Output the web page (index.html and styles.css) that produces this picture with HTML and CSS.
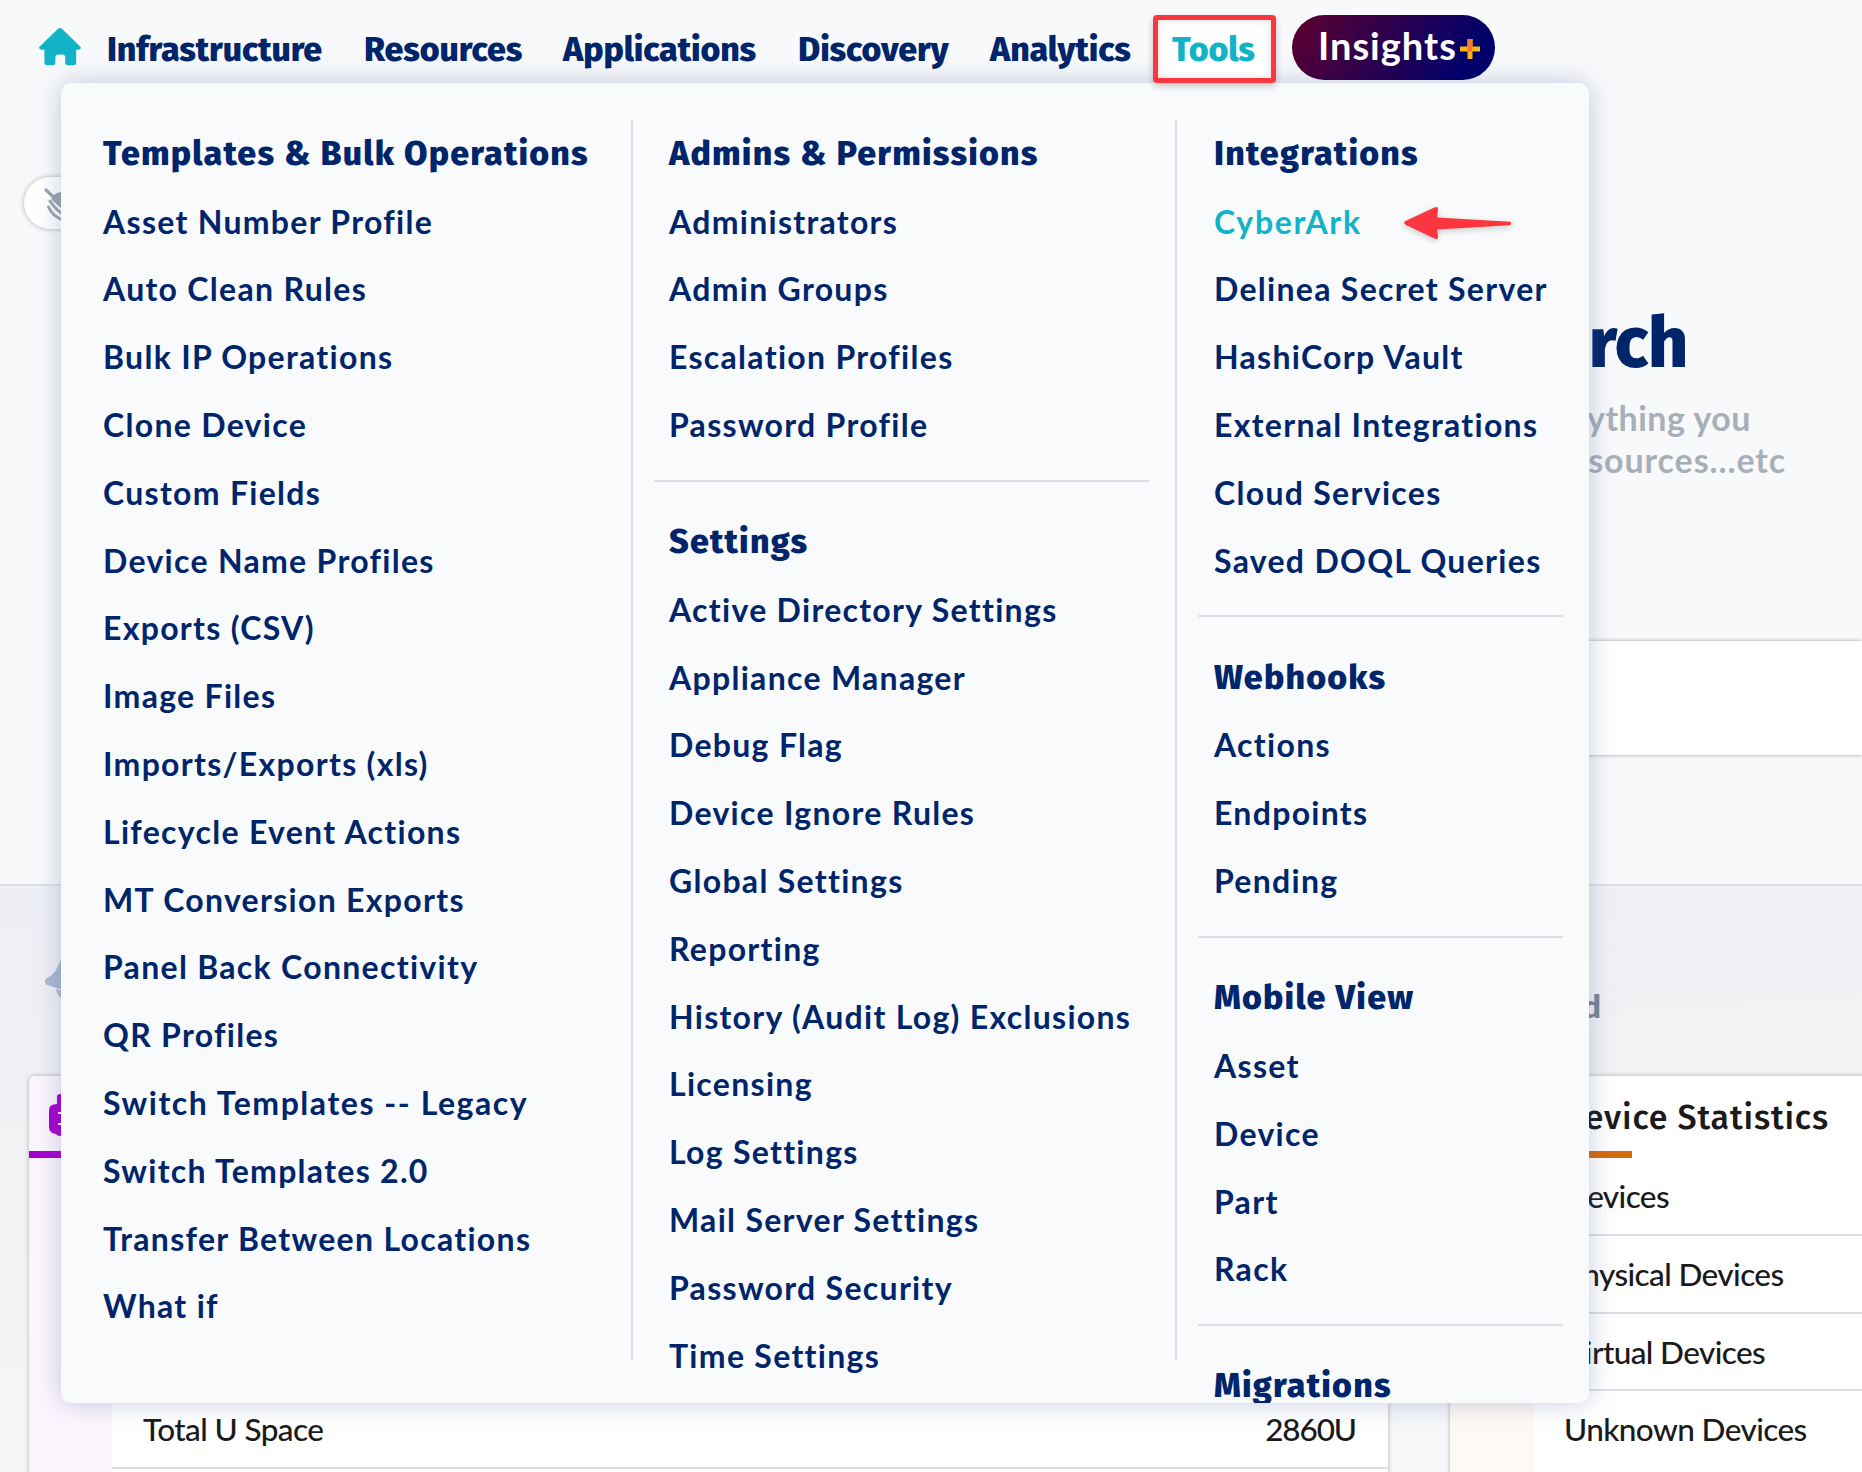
FILE: index.html
```html
<!DOCTYPE html>
<html lang="en">
<head>
<meta charset="utf-8">
<title>Tools</title>
<link rel="stylesheet" href="styles.css">
</head>
<body>
<div class="page">
  <header class="topbar">
    <svg class="home" viewBox="0 0 42 38"><path d="M18.6 1.3a3.4 3.4 0 0 1 4.8 0L41 18.2c1.6 1.5.6 3.6-1.4 3.6H37.200V34.500a2.800 2.800 0 0 1-2.800 2.800H29a2.800 2.800 0 0 1-2.800-2.800V29.400a3 3 0 0 0-3-3h-3.800a3 3 0 0 0-3 3V34.500a2.800 2.800 0 0 1-2.800 2.800H8.200a2.800 2.800 0 0 1-2.800-2.800V21.800H2.400C.4 21.800-.6 19.700 1 18.200z"/></svg>
    <nav class="nav">
      <a class="w-infra">Infrastructure</a>
      <a class="w-res">Resources</a>
      <a class="w-app">Applications</a>
      <a class="w-disc">Discovery</a>
      <a class="w-ana">Analytics</a>
    </nav>
    <a class="tools">Tools</a>
    <a class="insights">Insights<svg class="plus" viewBox="0 0 20 20"><path fill="#fdb515" d="M0 7.500h20v5H0zM7.500 0h5v20h-5z"/><path fill="#f47a35" d="M7.500 0h5v7.500l-1 5h-4z"/></svg></a>
  </header>

  <section class="hero">
    <div class="toggle"><svg viewBox="0 0 40 40"><path d="M2 3l28 26" stroke-width="3.200"/><path d="M6 14c4 6 8 11 16 15M4.500 20c3 7 8 11 15 13M9 12l20 18" stroke-width="3"/><path class="fill" d="M9 9q5-5 14-4v14z"/></svg></div>
    <div class="intro">
      <h1>Search</h1>
      <p class="line1">Search anything you</p>
      <p class="line2">need, resources...etc</p>
    </div>
    <div class="searchbox"></div>
  </section>

  <main class="dash">
    <div class="dash-head">
      <svg class="bell" viewBox="0 0 48 48"><path d="M24 0C17 2 15 8 13 13 10 20 7 22 2 25c-3 2-2 6 0 7l22 7zM11 36l13 4v6c-7 1-12-3-13-10z"/></svg>
      <span class="dash-title">Dashboard</span>
    </div>
    <div class="cards">
      <article class="card purple">
        <div class="side"><div class="side-icon"><svg viewBox="0 0 42 42"><path d="M8 10V3q0-3 3-3h20q3 0 3 3v7q8 0 8 7v16q0 6-7 7-1 2-4 2H11q-3 0-4-2-7-1-7-7V16q0-6 8-6z"/><path stroke="#fbf5fd" stroke-width="2" d="M9 19h24M9 30h24"/></svg></div></div>
        <div class="body">
          <div class="card-title"></div>
          <div class="row"></div><div class="row"></div><div class="row"></div>
          <div class="row"><span>Total U Space</span><span class="num">2860U</span></div>
        </div>
      </article>
      <article class="card orange">
        <div class="side"></div>
        <div class="body">
          <div class="card-title">Device Statistics</div>
          <div class="row"><span>Devices</span></div>
          <div class="row"><span>Physical Devices</span></div>
          <div class="row"><span>Virtual Devices</span></div>
          <div class="row last"><span>Unknown Devices</span></div>
        </div>
      </article>
    </div>
  </main>

  <div class="menu">
    <div class="col first">
      <ul>
        <li class="head">Templates &amp; Bulk Operations</li>
        <li>Asset Number Profile</li><li>Auto Clean Rules</li><li>Bulk IP Operations</li><li>Clone Device</li><li>Custom Fields</li><li>Device Name Profiles</li><li>Exports (CSV)</li><li>Image Files</li><li>Imports/Exports (xls)</li><li>Lifecycle Event Actions</li><li>MT Conversion Exports</li><li>Panel Back Connectivity</li><li>QR Profiles</li><li class="wide">Switch Templates -- Legacy</li><li>Switch Templates 2.0</li><li>Transfer Between Locations</li><li>What if</li>
      </ul>
    </div>
    <div class="col">
      <ul>
        <li class="head">Admins &amp; Permissions</li>
        <li>Administrators</li><li>Admin Groups</li><li>Escalation Profiles</li><li>Password Profile</li>
      </ul>
      <ul>
        <li class="head">Settings</li>
        <li>Active Directory Settings</li><li>Appliance Manager</li><li>Debug Flag</li><li>Device Ignore Rules</li><li>Global Settings</li><li>Reporting</li><li>History (Audit Log) Exclusions</li><li>Licensing</li><li>Log Settings</li><li>Mail Server Settings</li><li>Password Security</li><li>Time Settings</li>
      </ul>
    </div>
    <div class="col">
      <ul>
        <li class="head">Integrations</li>
        <li class="active">CyberArk</li><li>Delinea Secret Server</li><li>HashiCorp Vault</li><li>External Integrations</li><li>Cloud Services</li><li>Saved DOQL Queries</li>
      </ul>
      <ul>
        <li class="head">Webhooks</li>
        <li>Actions</li><li>Endpoints</li><li>Pending</li>
      </ul>
      <ul>
        <li class="head">Mobile View</li>
        <li>Asset</li><li>Device</li><li>Part</li><li>Rack</li>
      </ul>
      <ul>
        <li class="head">Migrations</li>
      </ul>
    </div>
  </div>
  <svg class="arrow" viewBox="0 0 112 36"><path d="M3 15.700L32 2.200q3-1 3 1.800L34.300 12.500 107 16.800q2.500 1.700 0 3.400L34.300 24.500 35 32q0 3-3 1.800L3 20q-4-2.200 0-4.300z"/></svg>
</div>
</body>
</html>
```
FILE: styles.css
```css
* { box-sizing: border-box; }
body { margin: 0; font-family: "Lato", "Open Sans", sans-serif; background: #f8f9fb; }
h1, p, ul { margin: 0; padding: 0; list-style: none; font-weight: inherit; }

.page { position: relative; width: 1862px; height: 1472px; overflow: hidden; display: flex; flex-direction: column; }

/* top navigation */
.topbar { position: relative; z-index: 3; height: 83px; flex: none; display: flex; align-items: flex-start; padding-left: 39px; }
.home { width: 42px; height: 38px; margin-top: 27.500px; fill: #11b3c6; flex: none; }
.nav { display: flex; padding: 30px 0 0 26px; }
.nav a, .tools { font: 800 34px/40px "Fira Sans", "Noto Sans", sans-serif; letter-spacing: -0.100px; color: #00256a; white-space: nowrap; }
.w-infra { width: 257px; }
.w-res { width: 199px; }
.w-app { width: 235px; }
.w-disc { width: 192px; }
.w-ana { width: 163px; }
.tools { width: 123px; height: 68px; margin: 14.500px 0 0 0; border: 5.500px solid #fb3641; border-radius: 4px; background: #fff; padding: 10px 0 0 14px; color: #11b3c6; box-shadow: 0 3px 7px rgba(0,0,0,.22), inset 0 0 7px rgba(0,0,0,.14); }
.insights { display: flex; width: 203px; height: 65px; margin: 15px 0 0 16px; padding: 4px 0 0 26px; border-radius: 33px; background: linear-gradient(120deg, #5e002f 0%, #00006b 85%); color: #fff; font: 700 38px/52px "Lato", sans-serif; letter-spacing: 1px; }
.plus { width: 20px; height: 20px; margin: 20px 0 0 3px; }

/* search area */
.hero { height: 803px; flex: none; border-bottom: 2px solid #dde0e5; display: grid; grid-template-columns: 400px 1fr; grid-template-rows: 229px 327px 116px; }
.toggle { width: 100px; height: 52px; margin: 94px 0 0 24px; padding: 10px 0 0 20px; border-radius: 26px; background: #fff; box-shadow: 0 0 5px rgba(0,0,0,.3); }
.toggle svg { width: 40px; height: 40px; stroke: #9aa4b1; fill: none; stroke-linecap: round; }
.toggle .fill { fill: #9aa4b1; stroke: none; }
.intro { grid-column: 2; grid-row: 1 / 3; text-align: right; }
.intro h1 { font: 800 70px/84px "Fira Sans", "Noto Sans", sans-serif; letter-spacing: -.300px; color: #00256a; margin: 219px 174px 0 0; }
.intro p { font-size: 34px; font-weight: 700; line-height: 42px; letter-spacing: .5px; color: #a8afb7; }
.intro .line1 { margin: 11px 111px 0 0; }
.intro .line2 { margin-right: 76px; letter-spacing: .9px; }
.searchbox { grid-column: 2; grid-row: 3; margin-top: 2px; height: 114px; background: #fff; box-shadow: 0 0 4px rgba(0,0,0,.35); }

/* dashboard */
.dash { flex: 1; background: linear-gradient(176deg, #eeeff5 0, #f2f2f4 38%, #f5f7f9 75%, #f5f7f9 100%); }
.dash-head { display: flex; height: 190px; }
.bell { width: 48px; height: 48px; margin: 67px 0 0 45px; fill: #abb8d0; }
.dash-title { margin: 100px 261px 0 auto; font-size: 32px; font-weight: 800; line-height: 40px; color: #758797; }
.cards { display: flex; gap: 62px; padding-left: 29px; }
.card { display: flex; width: 1359px; height: 500px; flex: none; border-radius: 6px; background: #fff; box-shadow: 0 0 4px rgba(0,0,0,.3); }
.side { width: 83px; flex: none; border-radius: 6px 0 0 0; }
.purple .side { background: #fbf5fd; }
.orange .side { background: #fdf9f4; }
.side-icon { height: 82px; border-bottom: 7px solid #a600cf; padding: 18px 0 0 20px; }
.side-icon svg { width: 42px; height: 42px; fill: #a600cf; }
.body { flex: 1; }
.card-title { height: 82px; width: 99px; white-space: nowrap; border-bottom: 7px solid #d66b0b; padding: 22px 0 0 29px; font: 500 34px/40px "Fira Sans", "Noto Sans", sans-serif; color: #1a1a1a; letter-spacing: .8px; }
.row { display: flex; justify-content: space-between; height: 77.750px; padding: 0 32px 0 31px; border-bottom: 2px solid #dadde4; font-size: 31.500px; font-weight: 500; line-height: 76px; letter-spacing: -.6px; color: #1a1a1a; }
.row .num { letter-spacing: -1.100px; }
.row.last { border: 0; }

/* dropdown menu lying over the page */
.menu { position: absolute; z-index: 2; left: 61px; top: 83px; width: 1528px; height: 1320px; padding-top: 37px; overflow: hidden; border-radius: 10px; background: #f8fafc; display: grid; grid-template-columns: 572px 544px 412px; grid-template-rows: 1241px; box-shadow: 0 0 26px rgba(80,100,160,.32); }
.col { border-right: 2px solid #dddfe6; }
.col:last-child { border-right: 0; }
.col ul { margin: 0 26px 0 21px; padding: 26.300px 0 0 15px; border-top: 2px solid #dddfe6; }
.col:last-child ul { padding-left: 16px; }
.col ul:first-child { padding-top: 0; border-top: 0; margin-top: -.200px; }
.col ul:not(:last-child) { margin-bottom: 21px; }
.first ul { margin-left: 27px; }
.col li { height: 67.800px; line-height: 68.600px; font-size: 32px; font-weight: 700; letter-spacing: 1.300px; color: #00256a; white-space: nowrap; }
.col .wide { letter-spacing: 1.550px; }
.col .head { font: 800 34px/67.800px "Fira Sans", "Noto Sans", sans-serif; letter-spacing: 1.200px; }
.col .active { color: #11b3c6; letter-spacing: 1.700px; }

/* pointer beside the active entry */
.arrow { position: absolute; z-index: 4; left: 1403px; top: 205px; width: 112px; height: 36px; fill: #fb3641; filter: drop-shadow(0 2px 3px rgba(0,0,0,.2)); }
```
